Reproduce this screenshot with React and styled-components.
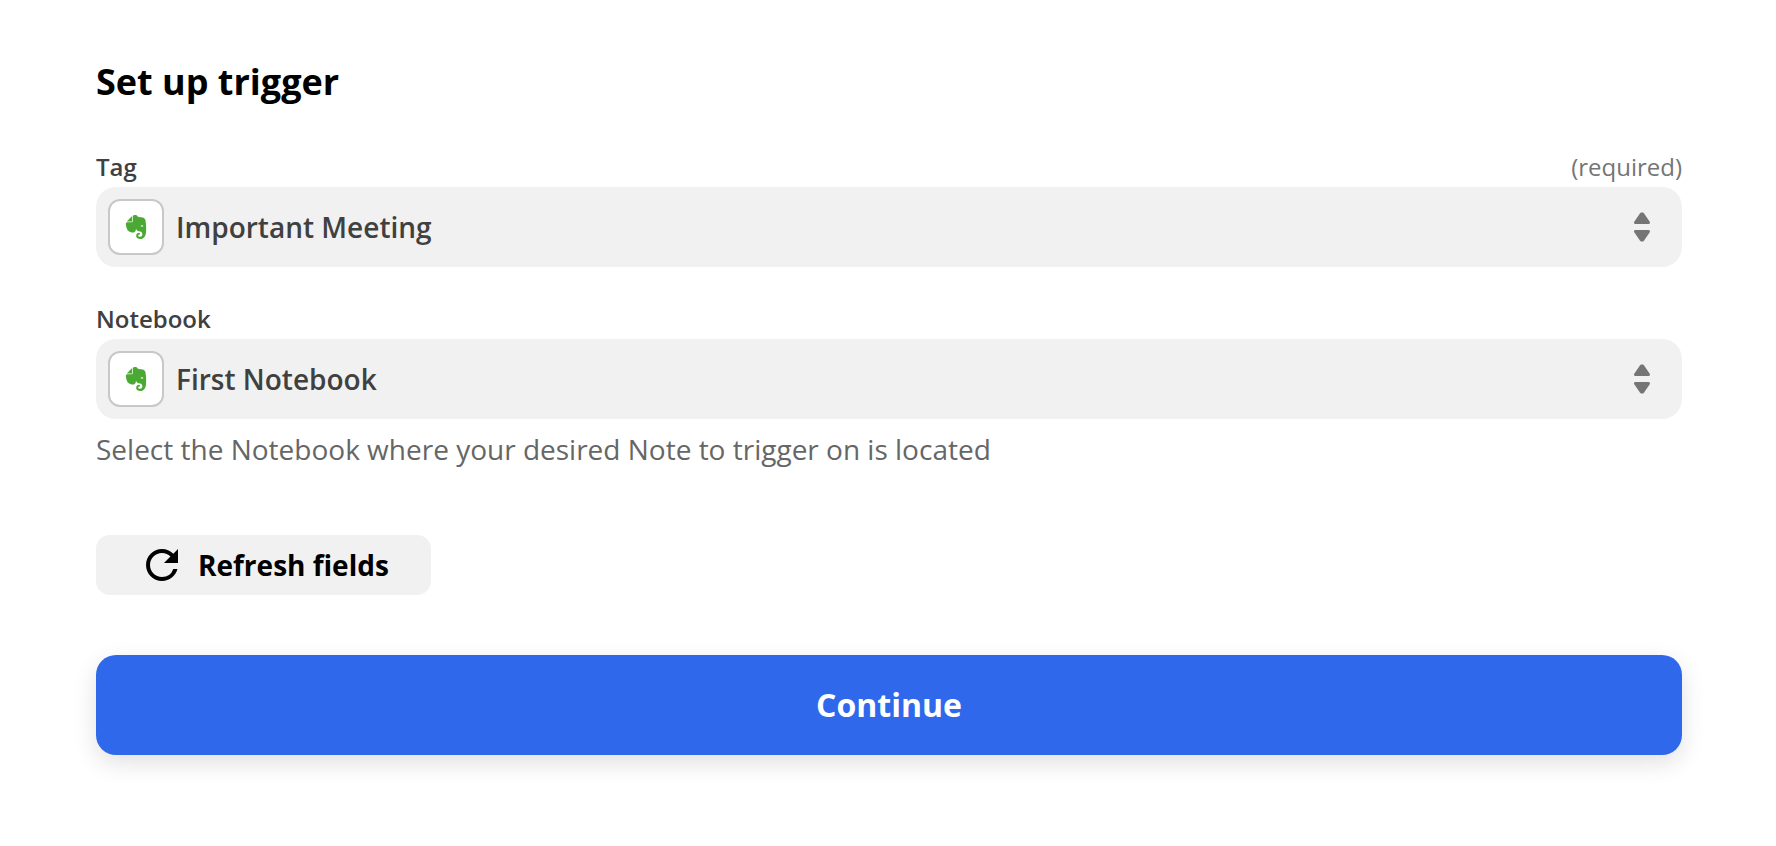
import { useState } from "react";
import styled, { createGlobalStyle } from "styled-components";
import { SiEvernote } from "react-icons/si";
import { MdRefresh } from "react-icons/md";

const App = () => {
  const [tag, setTag] = useState("Important Meeting");
  const [notebook, setNotebook] = useState("First Notebook");

  return (
    <>
      <GlobalStyle />
      <Form onSubmit={(e) => e.preventDefault()}>
        <Title>Set up trigger</Title>
        <Fields>
          <SelectField
            id="tag"
            label="Tag"
            required
            value={tag}
            options={["Important Meeting"]}
            onChange={setTag}
          />
          <SelectField
            id="notebook"
            label="Notebook"
            value={notebook}
            options={["First Notebook"]}
            help="Select the Notebook where your desired Note to trigger on is located"
            onChange={setNotebook}
          />
        </Fields>
        <RefreshButton type="button">
          <MdRefresh size={48} />
          Refresh fields
        </RefreshButton>
        <ContinueButton type="submit">Continue</ContinueButton>
      </Form>
    </>
  );
};

const SelectField = ({ id, label, required, value, options, help, onChange }) => (
  <Field>
    <FieldHeader>
      <Label htmlFor={id}>{label}</Label>
      {required && <Required>(required)</Required>}
    </FieldHeader>
    <SelectContainer>
      <Select
        id={id}
        value={value}
        required={required}
        onChange={(e) => onChange(e.target.value)}
      >
        {options.map((option) => (
          <option key={option}>{option}</option>
        ))}
      </Select>
      <AppIcon>
        <SiEvernote size={24} />
      </AppIcon>
      <Arrows viewBox="0 0 16 30" aria-hidden="true">
        <path d="M1.5 10.500h13L8.700 2h-1.400z" />
        <path d="M1.5 19.500h13L8.700 28h-1.400z" />
      </Arrows>
    </SelectContainer>
    {help && <HelpText>{help}</HelpText>}
  </Field>
);

export default App;

const GlobalStyle = createGlobalStyle`
  * {
    box-sizing: border-box;
  }
  body {
    background-color: #fff;
    font-family: "Open Sans", sans-serif;
    margin: 0;
  }
  button,
  select {
    font-family: inherit;
  }
`;

const Form = styled.form`
  align-items: flex-start;
  display: flex;
  flex-direction: column;
  padding: 58px 94px 64px 96px;
`;

const Title = styled.h1`
  color: #000;
  font-size: 36px;
  font-weight: 700;
  line-height: 48px;
  margin: 0 0 45px;
`;

const Fields = styled.div`
  display: flex;
  flex-direction: column;
  gap: 36px;
  width: 100%;
`;

const Field = styled.div`
  display: flex;
  flex-direction: column;
`;

const FieldHeader = styled.div`
  display: flex;
  font-size: 24px;
  justify-content: space-between;
  line-height: 32px;
  margin-bottom: 4px;
`;

const Label = styled.label`
  color: #404040;
  font-weight: 600;
`;

const Required = styled.span`
  color: #757575;
`;

const SelectContainer = styled.div`
  position: relative;
`;

const Select = styled.select`
  appearance: none;
  background-color: #f1f1f1;
  border: none;
  border-radius: 20px;
  color: #404040;
  cursor: pointer;
  display: block;
  font-size: 28px;
  font-weight: 600;
  height: 80px;
  padding: 0 80px;
  width: 100%;
`;

const AppIcon = styled.span`
  align-items: center;
  background-color: #fff;
  border: 2px solid #c8c8c8;
  border-radius: 12px;
  color: #4ba833;
  display: flex;
  height: 56px;
  justify-content: center;
  left: 12px;
  pointer-events: none;
  position: absolute;
  top: 12px;
  width: 56px;
`;

const Arrows = styled.svg`
  fill: #757575;
  height: 30px;
  pointer-events: none;
  position: absolute;
  right: 32px;
  stroke: #757575;
  stroke-linejoin: round;
  stroke-width: 3px;
  top: 25px;
  width: 16px;
`;

const HelpText = styled.p`
  color: #666;
  font-size: 28px;
  line-height: 44px;
  margin: 8px 0 0;
`;

const RefreshButton = styled.button`
  align-items: center;
  background-color: #f1f1f1;
  border: none;
  border-radius: 14px;
  color: #000;
  cursor: pointer;
  display: flex;
  font-size: 28px;
  font-weight: 700;
  gap: 12px;
  height: 60px;
  margin-top: 64px;
  padding: 0 42px;
`;

const ContinueButton = styled.button`
  background-color: #3068ec;
  border: none;
  border-radius: 20px;
  box-shadow: 0 8px 24px rgba(0, 0, 0, 0.12);
  color: #fff;
  cursor: pointer;
  font-size: 32px;
  font-weight: 700;
  height: 100px;
  margin-top: 60px;
  padding: 0 42px 2px;
  width: 100%;
`;
